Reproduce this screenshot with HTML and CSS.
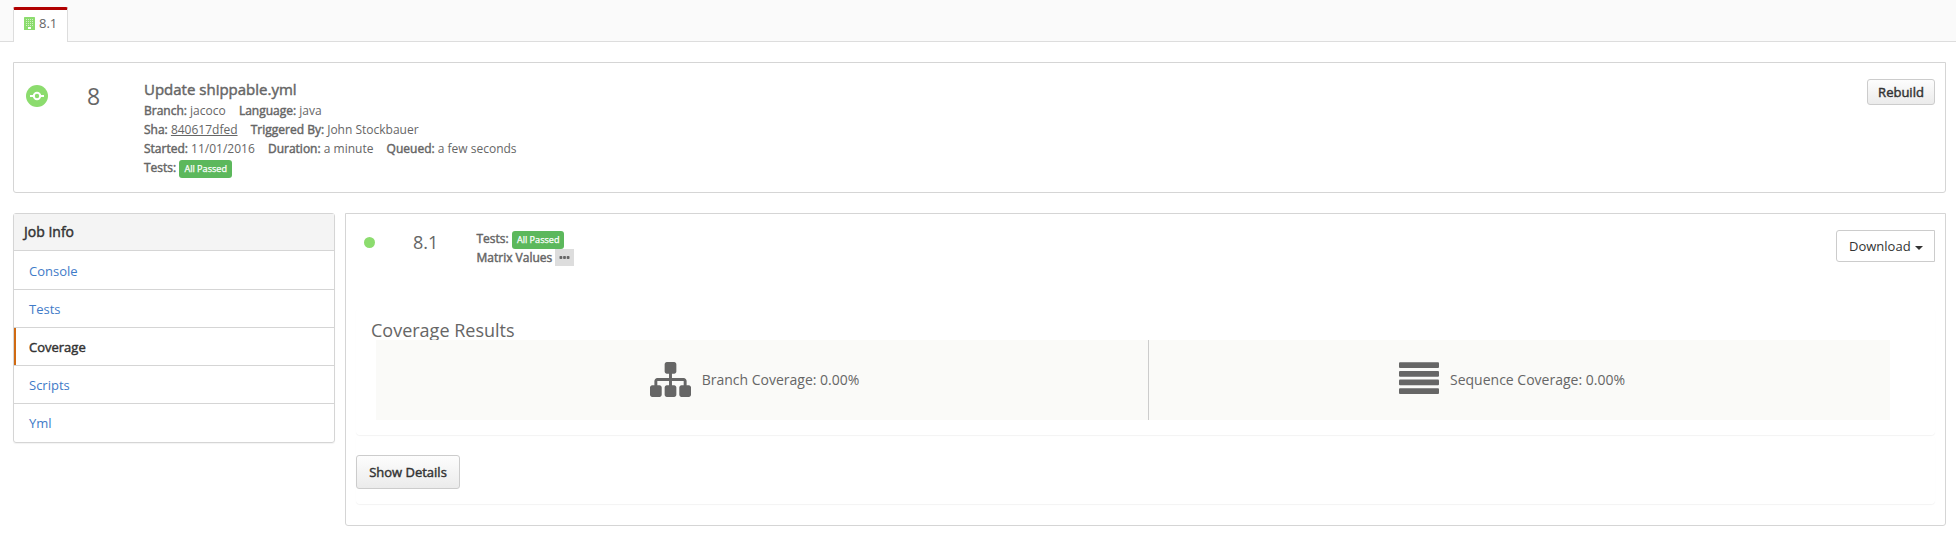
FILE: index.html
```html
<!DOCTYPE html>
<html lang="en">
<head>
<meta charset="utf-8">
<title>Build 8.1</title>
<link rel="stylesheet" href="styles.css">
</head>
<body>
<nav class="tabs">
  <a class="tab">
    <svg class="tab-icon" viewBox="0 0 11 13"><path fill="#8cdc6e" d="M.6 0h9.8q.6 0 .6.6v11.800q0 .6-.6.6H.6q-.6 0-.6-.6V.6Q0 0 .6 0z"/><path stroke="#fff" stroke-opacity=".6" stroke-width="1" stroke-dasharray="1 1" d="M2 2.500h7M2 4.500h7M2 6.500h7M2 8.500h7"/><path fill="#fff" d="M4 10h3v2H4z"/></svg>
    <span>8.1</span>
  </a>
</nav>
<section class="panel run">
  <svg class="run-icon" viewBox="0 0 22 22"><circle cx="11" cy="11" r="11" fill="#8cdc6e"/><path stroke="#fff" stroke-width="2" d="M4 11h4M14 11h4"/><circle cx="11" cy="11" r="3.200" fill="none" stroke="#fff" stroke-width="2"/></svg>
  <div class="run-number">8</div>
  <div class="run-info">
    <h1 class="bold">Update shippable.yml</h1>
    <div class="line"><span><b>Branch:</b> jacoco</span><span><b>Language:</b> java</span></div>
    <div class="line"><span><b>Sha:</b> <u>840617dfed</u></span><span><b>Triggered By:</b> John Stockbauer</span></div>
    <div class="line"><span><b>Started:</b> 11/01/2016</span><span><b>Duration:</b> a minute</span><span><b>Queued:</b> a few seconds</span></div>
    <div class="line"><b>Tests:</b><span class="badge">All Passed</span></div>
  </div>
  <button class="btn rebuild">Rebuild</button>
</section>
<main class="columns">
  <aside class="side">
    <h2 class="side-title">Job Info</h2>
    <a class="side-link">Console</a>
    <a class="side-link">Tests</a>
    <a class="side-link active">Coverage</a>
    <a class="side-link">Scripts</a>
    <a class="side-link">Yml</a>
  </aside>
  <section class="panel job">
    <header class="job-head">
      <i class="dot"></i>
      <div class="job-number">8.1</div>
      <div class="job-info">
        <div class="line"><b>Tests:</b><span class="badge">All Passed</span></div>
        <div class="line"><b>Matrix Values</b><svg class="more" viewBox="0 0 19 17"><g fill="#666"><rect x="4.500" y="7" width="2.800" height="3" rx=".8"/><rect x="8.100" y="7" width="2.800" height="3" rx=".8"/><rect x="11.700" y="7" width="2.800" height="3" rx=".8"/></g></svg></div>
      </div>
      <button class="download">Download<i class="caret"></i></button>
    </header>
    <div class="box coverage">
      <h3>Coverage Results</h3>
      <div class="stats">
        <div class="stat branch">
          <svg class="sitemap" viewBox="0 128 1792 1536" preserveAspectRatio="none"><path fill="#666" d="M1792 1248v320q0 40-28 68t-68 28h-320q-40 0-68-28t-28-68v-320q0-40 28-68t68-28h96v-192H960v192h96q40 0 68 28t28 68v320q0 40-28 68t-68 28H736q-40 0-68-28t-28-68v-320q0-40 28-68t68-28h96v-192H320v192h96q40 0 68 28t28 68v320q0 40-28 68t-68 28H96q-40 0-68-28t-28-68v-320q0-40 28-68t68-28h96v-192q0-52 38-90t90-38h512V640h-96q-40 0-68-28t-28-68V224q0-40 28-68t68-28h320q40 0 68 28t28 68v320q0 40-28 68t-68 28h-96v192h512q52 0 90 38t38 90v192h96q40 0 68 28t28 68z"/></svg>
          <span>Branch Coverage: 0.00%</span>
        </div>
        <div class="stat">
          <svg class="bars" viewBox="0 0 40 32"><g fill="#666"><rect y=".3" width="40" height="5.700" rx="1"/><rect y="9" width="40" height="5.700" rx="1"/><rect y="17.600" width="40" height="5.700" rx="1"/><rect y="26.200" width="40" height="5.700" rx="1"/></g></svg>
          <span>Sequence Coverage: 0.00%</span>
        </div>
      </div>
    </div>
    <div class="box details"><button class="btn show">Show Details</button></div>
  </section>
</main>
</body>
</html>
```
FILE: styles.css
```css
* { box-sizing: border-box; }
body {
  margin: 0;
  background: #fff;
  color: #666;
  font: 13px/19px "Open Sans", sans-serif;
}
h1, h2, h3 { margin: 0; font-weight: 400; }
b, .bold, .btn, .side-title, .side-link.active {
  font-weight: 400;
  -webkit-text-stroke: .45px currentColor;
}
.tabs {
  display: flex;
  height: 42px;
  padding: 7px 0 0 13px;
  background: #fafafa;
  border-bottom: 1px solid #ddd;
}
.tab {
  display: flex;
  align-items: center;
  gap: 4px;
  width: 55px;
  height: 35px;
  padding: 0 0 5px 10px;
  background: #fff;
  border: 1px solid #ddd;
  border-top: 3px solid #b00000;
  border-bottom: 0;
  border-radius: 2px 2px 0 0;
}
.tab-icon { width: 11px; height: 13px; }
.panel {
  border: 1px solid #d5d5d5;
  border-radius: 0 0 3px 3px;
}
.run {
  display: flex;
  align-items: flex-start;
  width: 1933px;
  height: 131px;
  margin: 20px 0 0 13px;
  padding: 16px 10px 0 12px;
}
.run-icon { width: 22px; height: 22px; margin-top: 6px; }
.run-number { width: 96px; padding: 5px 0 0 39px; font-size: 23px; line-height: 24px; }
.run-info { flex: 1; }
.run-info h1 { height: 22px; font-size: 15px; line-height: 20px; }
.line { display: flex; align-items: center; gap: 13.200px; height: 19px; font-size: 12px; }
.line .badge { margin: 2px 0 0 -10px; }
.badge {
  height: 18px;
  padding: 0 5px;
  border-radius: 3px;
  background: #5cb85c;
  color: #fff;
  font-size: 9.100px;
  line-height: 17px;
  -webkit-text-stroke: .25px #fff;
}
.btn {
  border: 1px solid #ccc;
  border-radius: 3px;
  padding: 0;
  background: linear-gradient(#fdfdfd, #ebebeb);
  color: #333;
  font-family: inherit;
  font-size: 13px;
}
.rebuild { width: 68px; height: 26px; }
.columns { display: flex; align-items: flex-start; gap: 10px; padding: 20px 0 0 13px; }
.side {
  width: 322px;
  border: 1px solid #d5d5d5;
  border-radius: 3px;
  box-shadow: 0 1px 1px rgba(0, 0, 0, .05);
}
.side-title {
  height: 36px;
  padding-left: 10px;
  background: #f4f4f4;
  color: #333;
  font-size: 14px;
  line-height: 36px;
}
.side-link {
  display: block;
  height: 38px;
  padding: 1px 0 0 15px;
  border-top: 1px solid #d5d5d5;
  color: #3f7bc8;
  line-height: 36px;
}
.side-title + .side-link { height: 39px; padding-top: 2px; }
.side-link:last-child { height: 39px; }
.side-link.active {
  color: #333;
  background: linear-gradient(#d06a12, #d06a12) 0 0 / 2px 100% no-repeat;
}
.job { width: 1601px; height: 313px; padding: 16px 10px 0; }
.job-head { display: flex; align-items: flex-start; height: 78px; }
.dot { width: 11px; height: 11px; margin: 7px 0 0 8px; border-radius: 50%; background: #8cdc6e; }
.job-number { width: 101.500px; padding: 1px 0 0 38px; font-size: 18px; line-height: 22px; }
.job-info { flex: 1; margin-top: -1px; }
.more { width: 19px; height: 17px; margin-left: -10.500px; background: #ddd; }
.download {
  display: flex;
  align-items: center;
  gap: 4px;
  width: 99px;
  height: 32px;
  padding: 0 0 0 12px;
  border: 1px solid #ccc;
  border-radius: 3px 0 0 3px;
  background: #fff;
  color: #333;
  font: 13px "Open Sans", sans-serif;
}
.caret { border: 4px solid transparent; border-top-color: #333; border-bottom: 0; margin-top: 3px; }
.box { border-radius: 4px; box-shadow: 0 1px 1px rgba(0, 0, 0, .05); }
.coverage { height: 127px; padding: 10px 45px 0 20px; }
.coverage h3 { height: 22px; margin-left: -5px; font-size: 18px; line-height: 24px; }
.stats { position: relative; display: flex; height: 80px; background: #fafaf8; }
.stat { display: flex; flex: 1; align-items: center; justify-content: center; gap: 11px; padding: 0 15px 2px 0; font-size: 14px; }
.stat.branch { flex: 0 0 773px; border-right: 1px solid #ccc; }
.sitemap { width: 41px; height: 35px; }
.bars { width: 40px; height: 32px; margin-top: -3px; }
.details { height: 69px; padding-top: 20px; }
.show { width: 104px; height: 34px; }
```
